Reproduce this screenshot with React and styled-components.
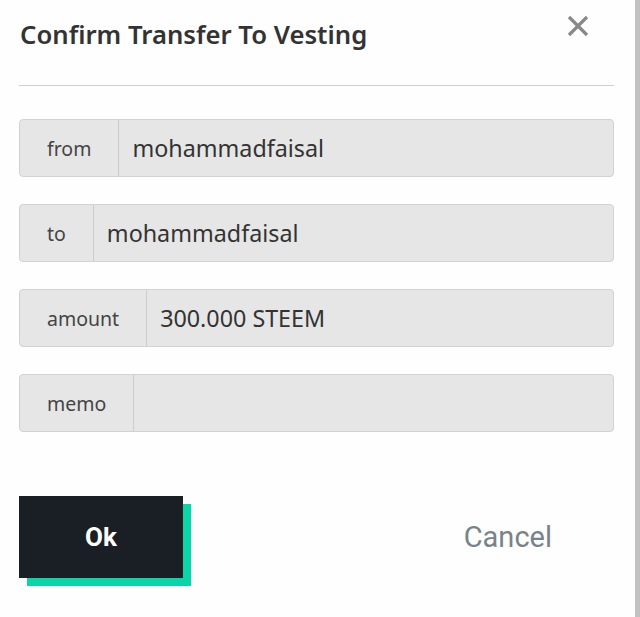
import styled, { createGlobalStyle } from "styled-components";

const GlobalStyle = createGlobalStyle`
    html, body {
        margin: 0;
        padding: 0;
        background: #fff;
    }

    body {
        font-family: "Noto Sans", "Open Sans", sans-serif;
    }
`;

const Page = styled.div`
    display: flex;
    width: 640px;
    height: 617px;
    overflow: hidden;
`;

const Dialog = styled.div`
    flex: 1;
    display: flex;
    flex-direction: column;
    padding: 0 21px 0 19px;
    background: #fefefe;
`;

const EdgeBar = styled.div`
    width: 5px;
    background: #c2c2c2;
`;

const Header = styled.div`
    display: flex;
    justify-content: space-between;
    align-items: flex-start;
    height: 85px;
    border-bottom: 1px solid #cfcfcf;
    padding-left: 1px;
`;

const Title = styled.h1`
    margin: 17px 0 0;
    font-size: 25.7px;
    font-weight: 600;
    line-height: 36px;
    color: #333;
`;

const CloseButton = styled.button`
    margin: 15px 25px 0 0;
    padding: 0;
    width: 22px;
    height: 22px;
    border: 0;
    background: none;
    cursor: pointer;
    display: flex;
`;

const Fields = styled.div`
    display: flex;
    flex-direction: column;
    gap: 27px;
    margin-top: 33px;
`;

const Field = styled.div`
    display: flex;
    height: 58px;
    border: 1px solid #d2d2d2;
    border-radius: 4px;
    background: #e6e6e6;
    box-sizing: border-box;
    overflow: hidden;
`;

const Label = styled.span`
    display: flex;
    align-items: center;
    padding: 0 27px;
    border-right: 1px solid #cdcdcd;
    font-size: 19.5px;
    color: #444;
`;

const Value = styled.span`
    display: flex;
    align-items: center;
    padding-left: 13px;
    font-size: 23.3px;
    color: #333;
`;

const Footer = styled.div`
    display: flex;
    justify-content: space-between;
    align-items: center;
    margin-top: 64px;
`;

const OkButton = styled.button`
    width: 164px;
    height: 82px;
    border: 0;
    background: #191f24;
    box-shadow: 8px 8px 0 #08d5a8;
    color: #fff;
    font-family: Roboto, sans-serif;
    font-weight: 700;
    font-size: 26px;
    cursor: pointer;
`;

const CancelButton = styled.button`
    margin-right: 62px;
    padding: 0;
    border: 0;
    background: none;
    color: #78828a;
    font-family: Roboto, sans-serif;
    font-size: 29px;
    cursor: pointer;
`;

const rows = [
    { label: "from", value: "mohammadfaisal" },
    { label: "to", value: "mohammadfaisal" },
    { label: "amount", value: "300.000 STEEM" },
    { label: "memo", value: "" },
];

export default function App() {
    return (
        <Page>
            <GlobalStyle />
            <Dialog>
                <Header>
                    <Title>Confirm Transfer To Vesting</Title>
                    <CloseButton aria-label="close">
                        <svg width="22" height="22" viewBox="0 0 22 22">
                            <path
                                d="M2 2 L20 20 M20 2 L2 20"
                                stroke="#888"
                                strokeWidth="3.2"
                                fill="none"
                            />
                        </svg>
                    </CloseButton>
                </Header>
                <Fields>
                    {rows.map(row => (
                        <Field key={row.label}>
                            <Label>{row.label}</Label>
                            <Value>{row.value}</Value>
                        </Field>
                    ))}
                </Fields>
                <Footer>
                    <OkButton>Ok</OkButton>
                    <CancelButton>Cancel</CancelButton>
                </Footer>
            </Dialog>
            <EdgeBar />
        </Page>
    );
}
